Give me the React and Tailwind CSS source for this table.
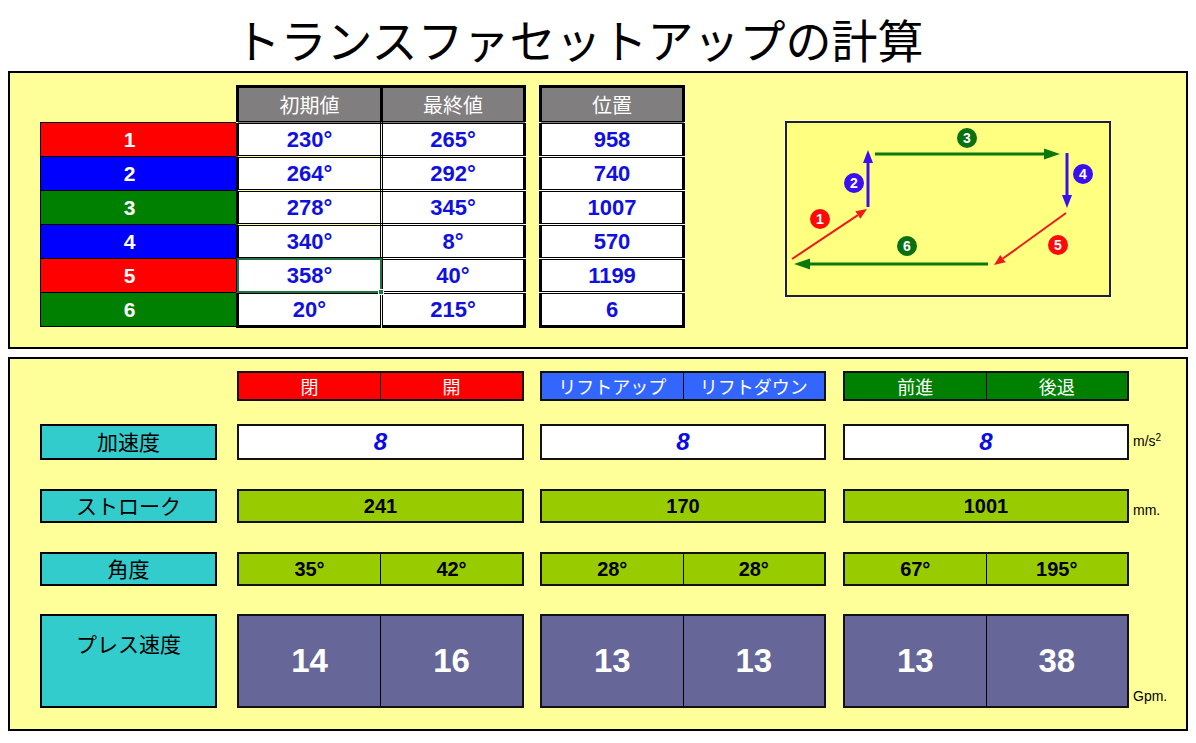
const JP = "font-['Noto_Sans_CJK_JP',sans-serif]";
const AR = "font-['Liberation_Sans','Noto_Sans_CJK_JP',sans-serif]";

const steps = [
  { n: 1, color: "bg-[#ff0000]", a: "230°", b: "265°", pos: 958 },
  { n: 2, color: "bg-[#0000ff]", a: "264°", b: "292°", pos: 740 },
  { n: 3, color: "bg-[#008000]", a: "278°", b: "345°", pos: 1007 },
  { n: 4, color: "bg-[#0000ff]", a: "340°", b: "8°", pos: 570 },
  { n: 5, color: "bg-[#ff0000]", a: "358°", b: "40°", pos: 1199, selected: true },
  { n: 6, color: "bg-[#008000]", a: "20°", b: "215°", pos: 6 },
];

function arrowHead(x1, y1, x2, y2, len, w) {
  const dx = x2 - x1;
  const dy = y2 - y1;
  const l = Math.hypot(dx, dy);
  const ux = dx / l;
  const uy = dy / l;
  const bx = x2 - ux * len;
  const by = y2 - uy * len;
  const nx = -uy * (w / 2);
  const ny = ux * (w / 2);
  return {
    base: [bx, by],
    points: `${x2},${y2} ${bx + nx},${by + ny} ${bx - nx},${by - ny}`,
  };
}

function Arrow({ x1, y1, x2, y2, color, width, len, w }) {
  const h = arrowHead(x1, y1, x2, y2, len, w);
  return (
    <g>
      <line x1={x1} y1={y1} x2={h.base[0]} y2={h.base[1]} stroke={color} strokeWidth={width} />
      <polygon points={h.points} fill={color} />
    </g>
  );
}

function Badge({ cx, cy, fill, n }) {
  return (
    <g>
      <circle cx={cx} cy={cy} r="10" fill={fill} />
      <text
        x={cx}
        y={cy + 5}
        textAnchor="middle"
        fill="#fff"
        fontSize="14"
        fontWeight="bold"
        fontFamily="Liberation Sans, sans-serif"
      >
        {n}
      </text>
    </g>
  );
}

// 動作順の図
function Diagram() {
  const red = "#f01818";
  const blue = "#3a10f0";
  const green = "#0b780b";
  return (
    <div className="ml-[100px] mt-[36px] w-[326px] h-[176px] border-2 border-[#222] bg-[#ffff80] shadow-[0_0_0_1px_#ffffe0]">
      <svg width="322" height="172" viewBox="0 0 322 172">
        <Arrow x1={5} y1={136} x2={80} y2={86} color={red} width={2} len={11} w={9} />
        <Arrow x1={81} y1={84} x2={81} y2={27} color={blue} width={3} len={13} w={10} />
        <Arrow x1={88} y1={31} x2={273} y2={31} color={green} width={3} len={16} w={11} />
        <Arrow x1={280} y1={30} x2={280} y2={85} color={blue} width={3} len={13} w={10} />
        <Arrow x1={279} y1={90} x2={207} y2={142} color={red} width={2} len={11} w={9} />
        <Arrow x1={201} y1={141} x2={7} y2={141} color={green} width={3} len={16} w={11} />
        <Badge cx={33} cy={96} fill="#ff0a0a" n={1} />
        <Badge cx={67} cy={60} fill={blue} n={2} />
        <Badge cx={180} cy={15} fill="#0a7010" n={3} />
        <Badge cx={296} cy={51} fill={blue} n={4} />
        <Badge cx={271} cy={122} fill="#ff0a0a" n={5} />
        <Badge cx={120} cy={123} fill="#0a7010" n={6} />
      </svg>
    </div>
  );
}

function AngleTable() {
  const head = `border-[3px] border-solid border-black bg-[#807e7e] text-white text-[20px] font-normal ${JP}`;
  const val = `border-[3px] border-double border-black bg-white text-[#1010e0] text-[22px] leading-none font-bold text-center ${AR}`;
  return (
    <table className="border-collapse">
      <thead>
        <tr className="h-[36px]">
          <th className="w-[197px] p-0" />
          <th className={`w-[144px] p-0 ${head}`}>初期値</th>
          <th className={`w-[143px] p-0 ${head}`}>最終値</th>
          <th className="w-[16px] p-0" />
          <th className={`w-[143px] p-0 ${head}`}>位置</th>
        </tr>
      </thead>
      <tbody>
        {steps.map((s, i) => {
          const last = i === steps.length - 1;
          const bottom = last ? "[border-bottom-style:solid]" : "";
          return (
            <tr key={s.n} className="h-[34px]">
              <td className={`p-0 pr-[18px] border border-black text-center text-white text-[21px] leading-none font-bold ${AR} ${s.color}`}>
                {s.n}
              </td>
              <td className={`p-0 relative ${val} [border-left-style:solid] ${bottom}`}>
                {s.a}
                {s.selected && (
                  <span className="absolute -left-[2px] -top-[2px] -right-[2px] -bottom-[2px] border-2 border-[#217346]">
                    <span className="absolute -right-[4px] -bottom-[4px] w-[6px] h-[6px] bg-[#217346] border border-white" />
                  </span>
                )}
              </td>
              <td className={`p-0 ${val} [border-right-style:solid] ${bottom}`}>{s.b}</td>
              <td className="p-0" />
              <td className={`p-0 ${val} [border-left-style:solid] [border-right-style:solid] ${bottom}`}>{s.pos}</td>
            </tr>
          );
        })}
      </tbody>
    </table>
  );
}

function Label({ children, tall }) {
  return (
    <div
      className={`w-[177px] shrink-0 border-2 border-black bg-[#33cccc] text-black text-[21px] ${JP} flex justify-center ${
        tall ? "h-[94px] items-start pt-[12px]" : "items-center"
      }`}
    >
      {children}
    </div>
  );
}

function Split({ w, bg, left, right, text, h }) {
  return (
    <div className={`${w} ${h} shrink-0 border-2 border-[#111] ${bg} flex`}>
      <div className={`flex-1 flex items-center justify-center border-r border-black ${text}`}>{left}</div>
      <div className={`flex-1 flex items-center justify-center ${text}`}>{right}</div>
    </div>
  );
}

function Single({ w, bg, value, text, h }) {
  return (
    <div className={`${w} ${h} shrink-0 border-2 border-[#111] ${bg} flex items-center justify-center ${text}`}>
      {value}
    </div>
  );
}

const widths = ["w-[287px]", "w-[286px]", "w-[286px]"];
const gaps = ["ml-[20px]", "ml-[16px]", "ml-[17px]"];

export default function App() {
  const hdr = `text-white text-[18px] ${JP}`;
  const accel = `text-[#0a0ae6] text-[24px] font-bold italic ${AR}`;
  const stroke = `text-black text-[20px] font-bold ${AR}`;
  const big = `text-white text-[33px] font-bold ${AR}`;
  const unit = `ml-[4px] text-[14px] text-black ${AR}`;

  const headers = [
    { bg: "bg-[#ff0000]", l: "閉", r: "開" },
    { bg: "bg-[#3366ff]", l: "リフトアップ", r: "リフトダウン" },
    { bg: "bg-[#008000]", l: "前進", r: "後退" },
  ];
  const strokes = [241, 170, 1001];
  const angles = [
    ["35°", "42°"],
    ["28°", "28°"],
    ["67°", "195°"],
  ];
  const speeds = [
    [14, 16],
    [13, 13],
    [13, 38],
  ];

  return (
    <div className="w-[1196px] h-[743px] bg-white overflow-hidden">
      <h1 className={`h-[71px] flex items-center justify-center pr-[38px] pt-[4px] text-[46px] leading-none font-normal text-black ${JP}`}>
        トランスファセットアップの計算
      </h1>

      <div className="mx-2 h-[278px] border-2 border-black bg-[#ffff99] flex items-start pl-[30px] pt-[12px]">
        <AngleTable />
        <Diagram />
      </div>

      <div className="mx-2 mt-2 h-[374px] border-2 border-black bg-[#ffff99] pl-[30px] pt-[12px] flex flex-col">
        <div className="flex">
          <div className="w-[177px] shrink-0" />
          {headers.map((h, i) => (
            <div key={i} className={gaps[i]}>
              <Split w={widths[i]} h="h-[30px]" bg={h.bg} left={h.l} right={h.r} text={hdr} />
            </div>
          ))}
        </div>

        <div className="flex mt-[23px] h-[36px]">
          <Label>加速度</Label>
          {[0, 1, 2].map((i) => (
            <div key={i} className={gaps[i]}>
              <Single w={widths[i]} h="h-[36px]" bg="bg-white" value="8" text={accel} />
            </div>
          ))}
          <span className={`${unit} self-center pb-[2px]`}>
            m/s<sup className="text-[10px]">2</sup>
          </span>
        </div>

        <div className="flex mt-[29px] h-[34px]">
          <Label>ストローク</Label>
          {strokes.map((v, i) => (
            <div key={i} className={gaps[i]}>
              <Single w={widths[i]} h="h-[34px]" bg="bg-[#99cc00]" value={v} text={stroke} />
            </div>
          ))}
          <span className={`${unit} self-end mb-[2px]`}>mm.</span>
        </div>

        <div className="flex mt-[29px] h-[34px]">
          <Label>角度</Label>
          {angles.map((a, i) => (
            <div key={i} className={gaps[i]}>
              <Split w={widths[i]} h="h-[34px]" bg="bg-[#99cc00]" left={a[0]} right={a[1]} text={stroke} />
            </div>
          ))}
        </div>

        <div className="flex mt-[28px] h-[94px]">
          <Label tall>プレス速度</Label>
          {speeds.map((s, i) => (
            <div key={i} className={gaps[i]}>
              <Split w={widths[i]} h="h-[94px]" bg="bg-[#666699]" left={s[0]} right={s[1]} text={big} />
            </div>
          ))}
          <span className={`${unit} self-end mb-[1px]`}>Gpm.</span>
        </div>
      </div>
    </div>
  );
}
